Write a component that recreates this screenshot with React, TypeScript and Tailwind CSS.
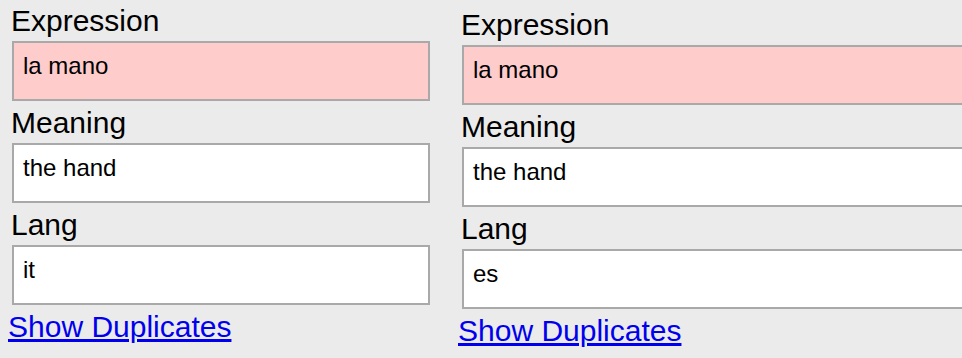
const fieldLabel = "block pl-[11px] text-[30px] leading-[33px] text-black";
const fieldBox =
  "block w-full h-[60px] border-2 border-[#a9a9a9] pl-[9px] pr-2 pt-[9px] text-[24px] leading-[28px] text-black resize-none overflow-hidden outline-none";

interface Entry {
  expression: string;
  meaning: string;
  lang: string;
}

function EntryForm({ entry, offset }: { entry: Entry; offset: "top" | "low" }) {
  return (
    <div className={offset === "top" ? "pt-[4px]" : "pt-[8px]"}>
      <label className={fieldLabel}>Expression</label>
      <div className="pl-[12px] mt-[4px]">
        <textarea readOnly value={entry.expression} className={fieldBox + " bg-[#ffcccc]"} />
      </div>
      <label className={fieldLabel + " mt-[5px]"}>Meaning</label>
      <div className="pl-[12px] mt-[4px]">
        <textarea readOnly value={entry.meaning} className={fieldBox + " bg-white"} />
      </div>
      <label className={fieldLabel + " mt-[5px]"}>Lang</label>
      <div className="pl-[12px] mt-[4px]">
        <textarea readOnly value={entry.lang} className={fieldBox + " bg-white"} />
      </div>
      <a
        href="#"
        className="inline-block mt-[5px] pl-[8px] text-[30px] leading-[33px] text-[#0000ee] underline"
        onClick={(e) => e.preventDefault()}
      >
        Show Duplicates
      </a>
    </div>
  );
}

export default function App() {
  return (
    <div
      className="w-[962px] h-[358px] overflow-hidden bg-[#ebebeb] flex gap-[32px]"
      style={{ fontFamily: '"Liberation Sans", Arial, Helvetica, sans-serif' }}
    >
      <div className="w-[430px] shrink-0">
        <EntryForm entry={{ expression: "la mano", meaning: "the hand", lang: "it" }} offset="top" />
      </div>
      <div className="w-[540px] shrink-0 -ml-[12px]">
        <EntryForm entry={{ expression: "la mano", meaning: "the hand", lang: "es" }} offset="low" />
      </div>
    </div>
  );
}
